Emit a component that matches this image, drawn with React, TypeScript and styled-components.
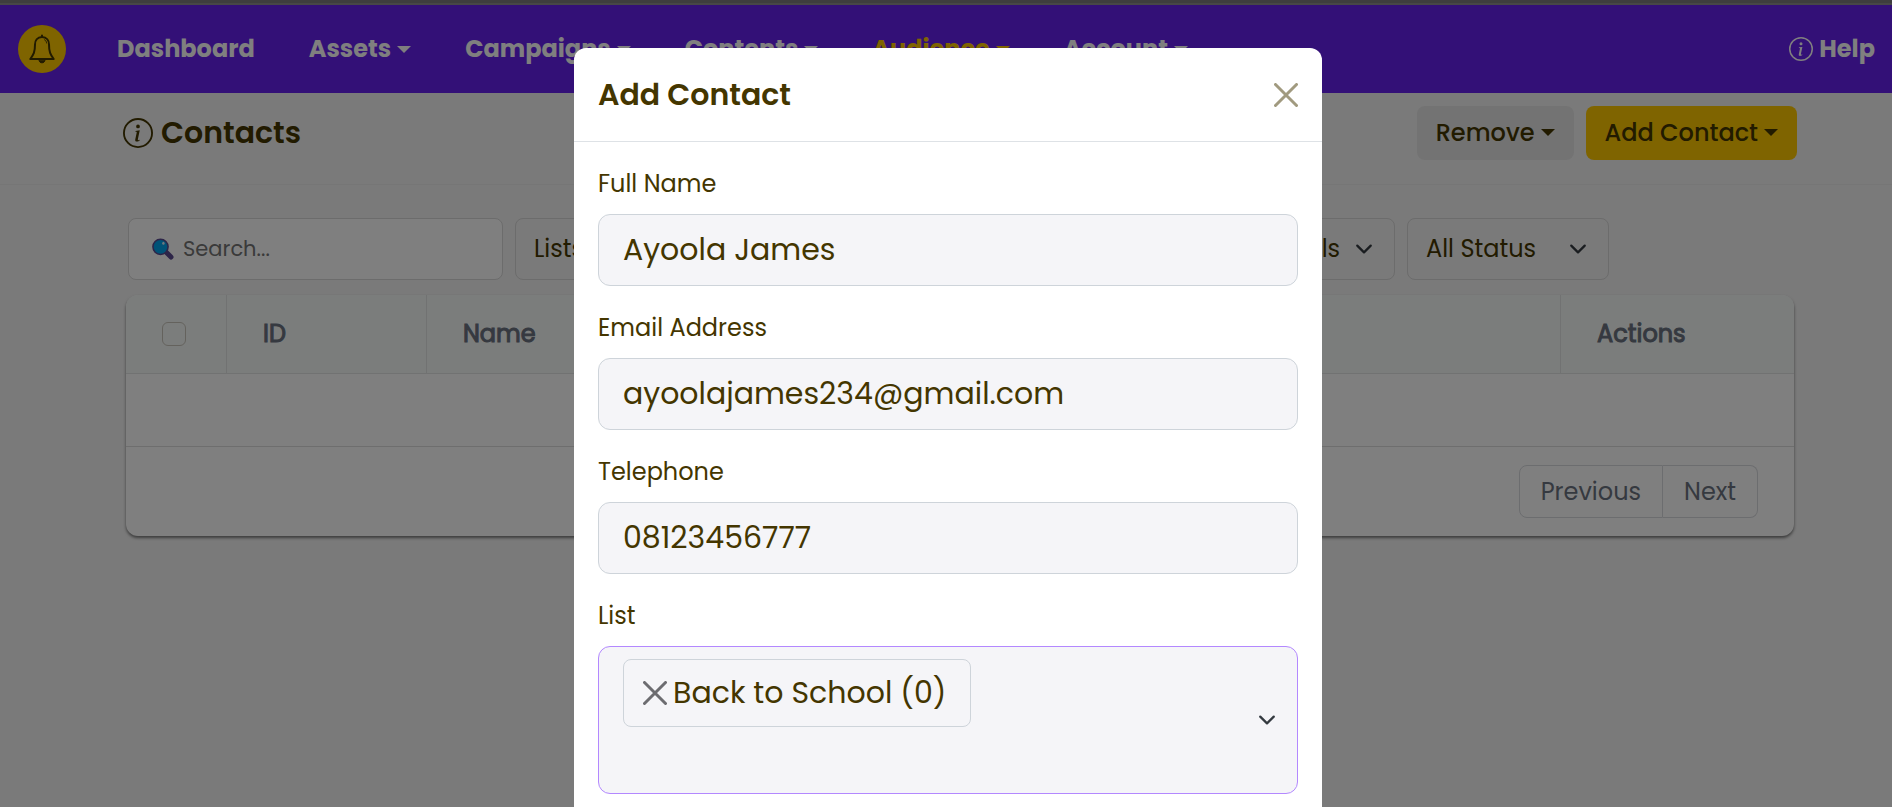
import React from "react";
import styled, { createGlobalStyle } from "styled-components";
import { BsInfoCircle } from "react-icons/bs";

const ink = "#443600";
const line = "#dee2e6";

const GlobalStyle = createGlobalStyle`
  *, *::before, *::after { box-sizing: border-box; }
  body {
    margin: 0;
    background: #f4f4f4;
    color: ${ink};
    font-family: Poppins, Inter, "Open Sans", sans-serif;
    font-size: 24px;
    line-height: 36px;
  }
  button, input, select { font: inherit; color: inherit; margin: 0; }
`;

const NavBar = styled.nav`
  display: flex;
  align-items: center;
  height: 93px;
  padding: 2px 17px 0 18px;
  background: #6720ee;
  border-top: 3px solid #7c7c7c;
  box-shadow: inset 0 2px #8e8e8e;
  color: #fff;
  font-weight: 700;
`;

const BellButton = styled.button`
  display: grid;
  place-items: center;
  width: 48px;
  height: 48px;
  margin-right: 51px;
  padding: 0;
  border: 0;
  border-radius: 50%;
  background: #ffc800;
`;

const NavLinks = styled.div`
  display: flex;
  flex: 1;
  gap: 54px;
`;

const NavLink = styled.a<{ $active?: boolean }>`
  display: flex;
  align-items: center;
  gap: 6px;
  color: ${(p) => (p.$active ? "#ffc800" : "inherit")};
  text-decoration: none;
`;

const Caret = styled.span`
  border: 7px solid transparent;
  border-top-color: currentColor;
  border-bottom: 0;
`;

const PageHeader = styled.header`
  display: flex;
  align-items: center;
  gap: 12px;
  height: 92px;
  padding: 0 95px 12px 123px;
  border-bottom: 1px solid #ececec;
`;

const PageTitle = styled.h1`
  display: flex;
  flex: 1;
  align-items: center;
  gap: 8px;
  margin: 0;
  font-size: 30px;
  font-weight: 600;
`;

const HeaderButton = styled.button<{ $primary?: boolean }>`
  display: flex;
  align-items: center;
  gap: 6px;
  height: 54px;
  padding: 0 19px;
  border: 0;
  border-radius: 8px;
  background: ${(p) => (p.$primary ? "#ffc800" : "#e6e6e6")};
  font-weight: 500;
`;

const Content = styled.main`
  padding: 33px 98px 24px 126px;
`;

const Filters = styled.div`
  display: flex;
  gap: 12px;
  margin: 0 0 15px 2px;
`;

const SearchBox = styled.label`
  display: flex;
  align-items: center;
  gap: 9px;
  flex: 0 1 375px;
  min-width: 0;
  height: 62px;
  padding: 0 23px;
  border: 1px solid #d8d8d8;
  border-radius: 8px;
  background: #fff;
  font-size: 21px;
`;

const SearchInput = styled.input`
  flex: 1;
  min-width: 0;
  padding: 0;
  border: 0;
  outline: 0;
  background: transparent;
  &::placeholder { color: #757575; opacity: 1; }
`;

const SelectBox = styled.div<{ $width: number }>`
  display: grid;
  align-items: center;
  flex: 0 1 ${(p) => p.$width}px;
  height: 62px;
  border: 1px solid #d8d8d8;
  border-radius: 8px;
  & > * { grid-area: 1 / 1; }
  & > svg { justify-self: end; margin-right: 21px; pointer-events: none; }
`;

const Select = styled.select`
  width: 100%;
  height: 100%;
  padding: 0 18px;
  border: 0;
  outline: 0;
  background: transparent;
  appearance: none;
`;

const Card = styled.section`
  border-radius: 12px;
  background: #fff;
  box-shadow: 0 2px 3px rgba(0, 0, 0, 0.5);
`;

const Table = styled.table`
  width: 100%;
  border-collapse: separate;
  border-spacing: 0;
  table-layout: fixed;
  color: #6b7280;
`;

const HeadCell = styled.th<{ $width?: number }>`
  width: ${(p) => (p.$width ? p.$width + "px" : "auto")};
  height: 79px;
  padding: 0 36px;
  border-bottom: 1px solid #e2e5e5;
  background: #f7fbf9;
  text-align: left;
  font-weight: 400;
  -webkit-text-stroke: 1px currentColor;
  & + & { border-left: 1px solid #e2e5e5; }
  &:first-child { border-top-left-radius: 12px; }
  &:last-child { border-top-right-radius: 12px; }
`;

const EmptyCell = styled.td`
  height: 73px;
  border-bottom: 1px solid #dcdcdc;
`;

const Checkbox = styled.input`
  display: block;
  width: 24px;
  height: 24px;
  border: 1px solid #c9c5bb;
  border-radius: 6px;
  appearance: none;
`;

const CardFooter = styled.div`
  display: flex;
  justify-content: flex-end;
  padding: 18px 36px;
`;

const PageButton = styled.button`
  height: 53px;
  padding: 0 21px;
  border: 1px solid #d8dade;
  background: transparent;
  color: #6b7280;
  &:first-child { border-radius: 8px 0 0 8px; }
  &:last-child { border-left: 0; border-radius: 0 8px 8px 0; }
`;

const Overlay = styled.div`
  position: fixed;
  inset: 0;
  overflow: hidden;
  padding: 48px 0 0 4px;
  background: rgba(0, 0, 0, 0.5);
`;

const Modal = styled.div`
  width: 100%;
  max-width: 748px;
  margin: 0 auto;
  border-radius: 12px;
  background: #fff;
`;

const ModalHeader = styled.div`
  display: flex;
  align-items: center;
  justify-content: space-between;
  height: 94px;
  padding: 0 24px;
  border-bottom: 1px solid ${line};
`;

const ModalTitle = styled.h2`
  margin: 0;
  font-size: 30px;
  font-weight: 600;
`;

const IconButton = styled.button`
  display: grid;
  place-items: center;
  padding: 0;
  border: 0;
  background: transparent;
`;

const ModalBody = styled.form`
  display: flex;
  flex-direction: column;
  gap: 24px;
  padding: 24px;
`;

const Field = styled.div`
  display: flex;
  flex-direction: column;
  gap: 12px;
`;

const TextInput = styled.input`
  width: 100%;
  height: 72px;
  padding: 0 24px;
  border: 1px solid #ced4da;
  border-radius: 12px;
  outline: 0;
  background: #f5f5f8;
  font-size: 30px;
`;

const TagBox = styled.div`
  display: flex;
  align-items: center;
  height: 148px;
  padding: 12px 21px 12px 24px;
  border: 1px solid #b388ff;
  border-radius: 12px;
  background: #f5f5f8;
`;

const Tags = styled.div`
  display: flex;
  flex: 1;
  flex-direction: column;
  align-items: flex-start;
  font-size: 30px;
`;

const Tag = styled.span`
  display: flex;
  align-items: center;
  gap: 6px;
  height: 68px;
  padding: 0 24px 0 19px;
  border: 1px solid #ced4da;
  border-radius: 8px;
`;

const TagInput = styled.input`
  width: 100%;
  height: 54px;
  padding: 0;
  border: 0;
  outline: 0;
  background: transparent;
`;

const Bell = () => (
  <svg width="26" height="30" viewBox="0 0 26 30" fill="none" stroke={ink} strokeWidth="2" strokeLinecap="round" strokeLinejoin="round">
    <path d="M13 1.5V3M13 3C8.2 3 6 6.6 6 10.5C6 18 4.6 20.5 1.3 25H24.7C21.4 20.5 20 18 20 10.5C20 6.6 17.8 3 13 3Z" />
    <path d="M15.6 5.8c1.3.8 1.9 1.9 2 3.2" strokeWidth="1" />
    <path d="M10 26.2c.3 1.8 1.5 2.6 3 2.6s2.7-.8 3-2.6Z" fill={ink} strokeWidth="1" />
  </svg>
);

const Magnifier = () => (
  <svg width="22" height="22" viewBox="0 0 22 22">
    <path d="M14.5 14.5 19 19" stroke="#5b4a90" strokeWidth="5" strokeLinecap="round" />
    <circle cx="8.5" cy="8.8" r="7.6" fill="#00a4ee" stroke="#5b4a90" strokeWidth="1.5" />
    <ellipse cx="11.4" cy="5.3" rx="1.2" ry="1.5" fill="#d9f1ff" />
  </svg>
);

const Chevron = () => (
  <svg width="18" height="18" viewBox="0 0 16 16" fill="none" stroke="#343a40" strokeWidth="2" strokeLinecap="round" strokeLinejoin="round">
    <path d="m2 5 6 6 6-6" />
  </svg>
);

const Cross = ({ color }: { color: string }) => (
  <svg width="24" height="24" viewBox="0 0 24 24" stroke={color} strokeWidth="3" strokeLinecap="round">
    <path d="M1.5 1.5 22.5 22.5M22.5 1.5 1.5 22.5" />
  </svg>
);

const menus = ["Assets", "Campaigns", "Contents", "Audience", "Account"];

const fields = [
  { id: "name", label: "Full Name", type: "text", value: "Ayoola James" },
  { id: "email", label: "Email Address", type: "email", value: "ayoolajames234@gmail.com" },
  { id: "phone", label: "Telephone", type: "tel", value: "08123456777" },
];

const filters = [
  { label: "Lists", width: 718 },
  { label: "Labels", width: 150 },
  { label: "All Status", width: 202 },
];

export default function App() {
  return (
    <>
      <GlobalStyle />
      <NavBar>
        <BellButton aria-label="Notifications"><Bell /></BellButton>
        <NavLinks>
          <NavLink href="#dashboard">Dashboard</NavLink>
          {menus.map((name) => (
            <NavLink key={name} href={`#${name.toLowerCase()}`} $active={name === "Audience"}>
              {name}
              <Caret />
            </NavLink>
          ))}
        </NavLinks>
        <NavLink href="#help"><BsInfoCircle size={24} />Help</NavLink>
      </NavBar>

      <PageHeader>
        <PageTitle><BsInfoCircle size={30} />Contacts</PageTitle>
        <HeaderButton>Remove<Caret /></HeaderButton>
        <HeaderButton $primary>Add Contact<Caret /></HeaderButton>
      </PageHeader>

      <Content>
        <Filters>
          <SearchBox>
            <Magnifier />
            <SearchInput type="search" aria-label="Search contacts" placeholder="Search..." />
          </SearchBox>
          {filters.map((f) => (
            <SelectBox key={f.label} $width={f.width}>
              <Select aria-label={f.label}><option>{f.label}</option></Select>
              <Chevron />
            </SelectBox>
          ))}
        </Filters>

        <Card>
          <Table>
            <thead>
              <tr>
                <HeadCell $width={100}><Checkbox type="checkbox" aria-label="Select all contacts" /></HeadCell>
                <HeadCell $width={200}>ID</HeadCell>
                <HeadCell>Name</HeadCell>
                <HeadCell $width={234}>Actions</HeadCell>
              </tr>
            </thead>
            <tbody>
              <tr><EmptyCell colSpan={4} /></tr>
            </tbody>
          </Table>
          <CardFooter>
            <PageButton>Previous</PageButton>
            <PageButton>Next</PageButton>
          </CardFooter>
        </Card>
      </Content>

      <Overlay>
        <Modal role="dialog" aria-modal="true" aria-labelledby="modal-title">
          <ModalHeader>
            <ModalTitle id="modal-title">Add Contact</ModalTitle>
            <IconButton aria-label="Close"><Cross color="#a19a7f" /></IconButton>
          </ModalHeader>
          <ModalBody>
            {fields.map((f) => (
              <Field key={f.id}>
                <label htmlFor={f.id}>{f.label}</label>
                <TextInput id={f.id} type={f.type} defaultValue={f.value} />
              </Field>
            ))}
            <Field>
              <label htmlFor="list">List</label>
              <TagBox>
                <Tags>
                  <Tag>
                    <IconButton type="button" aria-label="Remove Back to School"><Cross color="#6c6c70" /></IconButton>
                    Back to School (0)
                  </Tag>
                  <TagInput id="list" />
                </Tags>
                <Chevron />
              </TagBox>
            </Field>
          </ModalBody>
        </Modal>
      </Overlay>
    </>
  );
}
